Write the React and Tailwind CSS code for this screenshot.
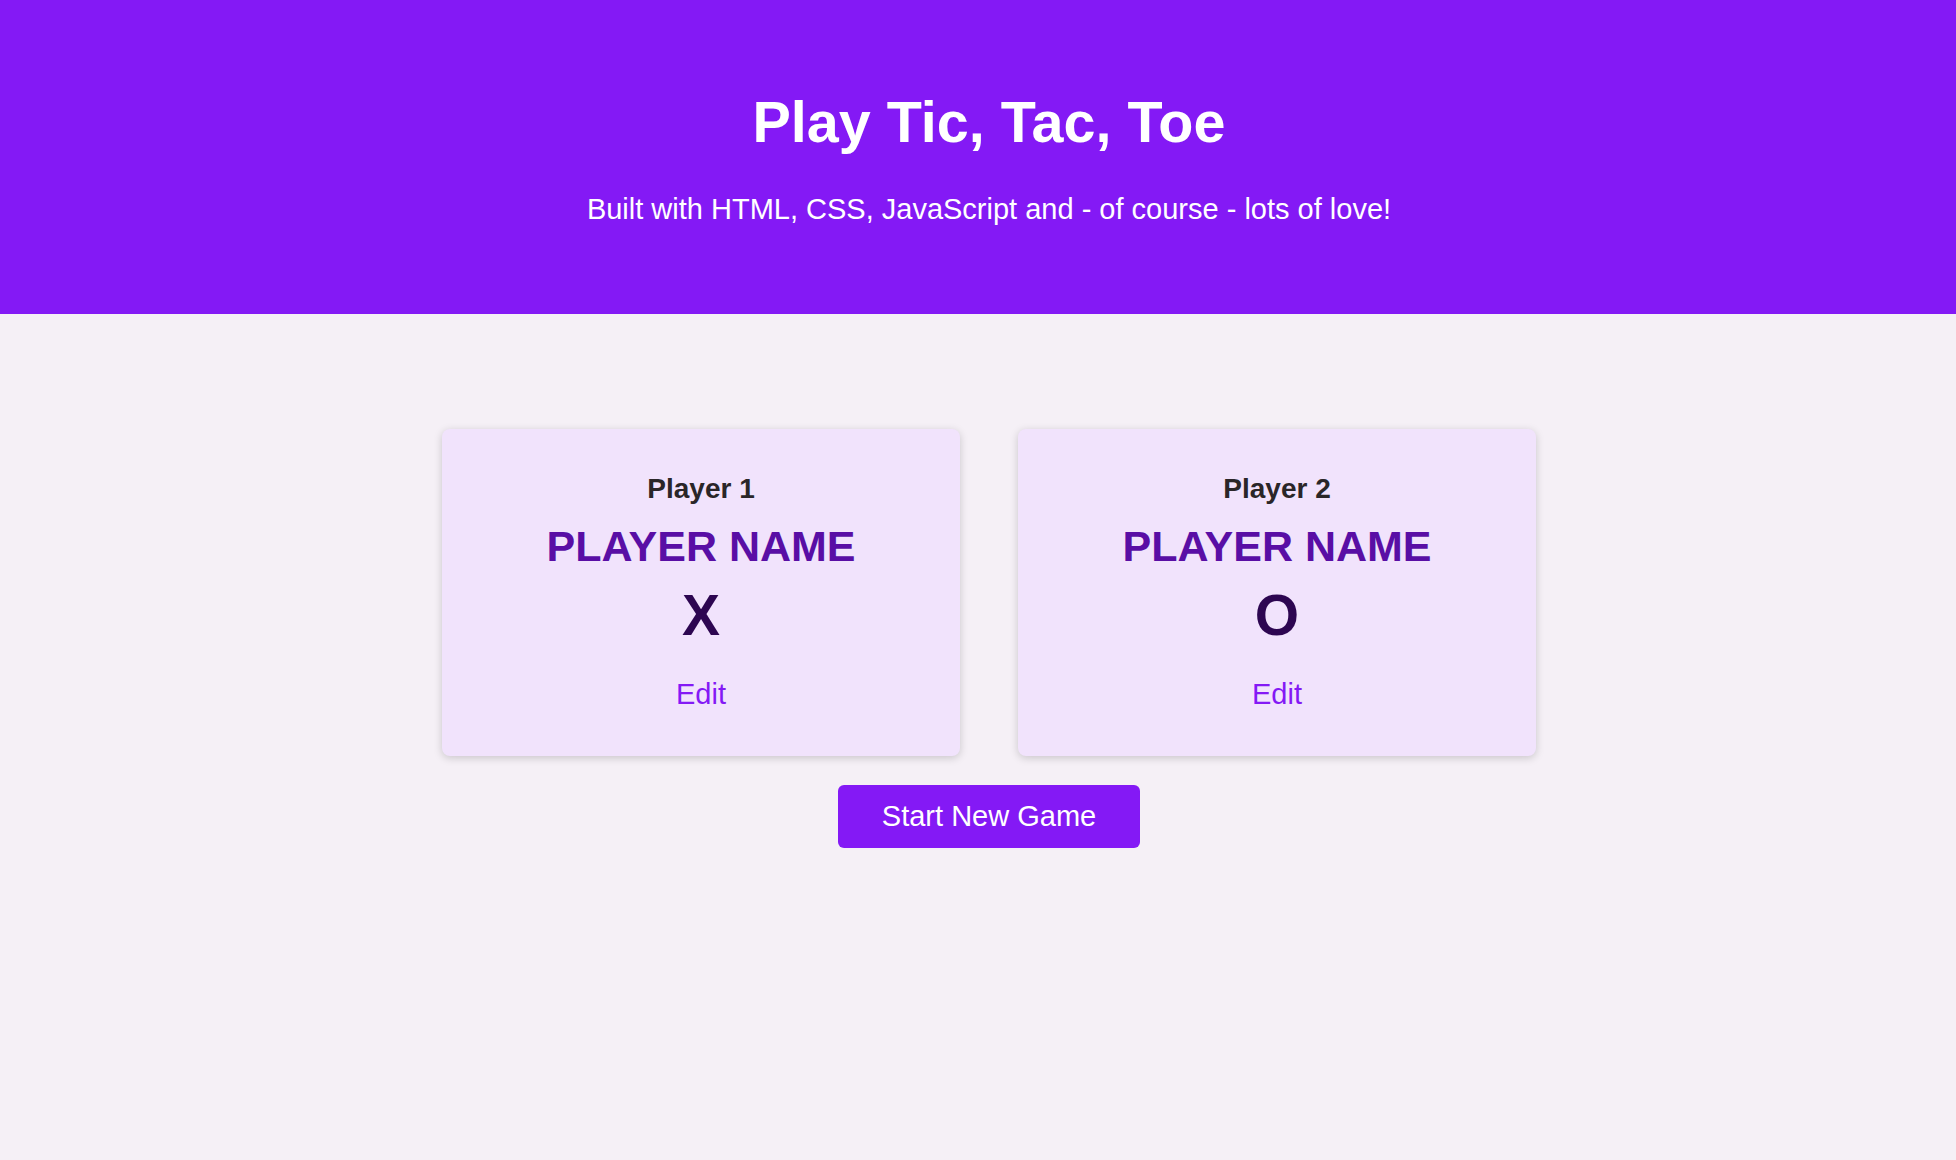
import React from "react";

const players = [
  { label: "Player 1", name: "PLAYER NAME", symbol: "X" },
  { label: "Player 2", name: "PLAYER NAME", symbol: "O" },
];

const PlayerCard = ({ label, name, symbol }) => (
  <li className="w-[518px] rounded-lg bg-[#f1e3fc] shadow-[0_2px_8px_rgba(0,0,0,0.18)] pt-[46px] pb-[47px] flex flex-col items-center text-center">
    <h2 className="text-[28px] leading-[28px] font-bold text-[#2a2628]">{label}</h2>
    <h3 className="mt-[22px] text-[43px] leading-[43px] font-bold text-[#590ea5]">{name}</h3>
    <p className="mt-[19px] text-[57px] leading-[57px] font-bold text-[#2d0651]">{symbol}</p>
    <button className="mt-9 text-[29px] leading-[29px] text-[#8419f5] bg-transparent cursor-pointer">
      Edit
    </button>
  </li>
);

export default function App() {
  return (
    <div
      className="min-h-screen bg-[#f5f0f6]"
      style={{ fontFamily: '"Liberation Sans", Arial, Helvetica, sans-serif' }}
    >
      {/* Header */}
      <header className="h-[314px] bg-[#8419f5] pt-[93px] pl-[22px] text-center text-white">
        <h1 className="text-[57.5px] leading-[58px] font-bold">Play Tic, Tac, Toe</h1>
        <p className="mt-11 text-[29px] leading-[29px]">
          Built with HTML, CSS, JavaScript and - of course - lots of love!
        </p>
      </header>

      {/* Game config */}
      <main className="pt-[115px] pl-[22px] flex flex-col items-center">
        <ol className="flex justify-center gap-[58px] list-none">
          {players.map((p) => (
            <PlayerCard key={p.label} {...p} />
          ))}
        </ol>
        <button className="mt-[29px] w-[302px] h-[63px] rounded-md bg-[#8419f5] text-white text-[29px] leading-[29px] cursor-pointer">
          Start New Game
        </button>
      </main>
    </div>
  );
}
